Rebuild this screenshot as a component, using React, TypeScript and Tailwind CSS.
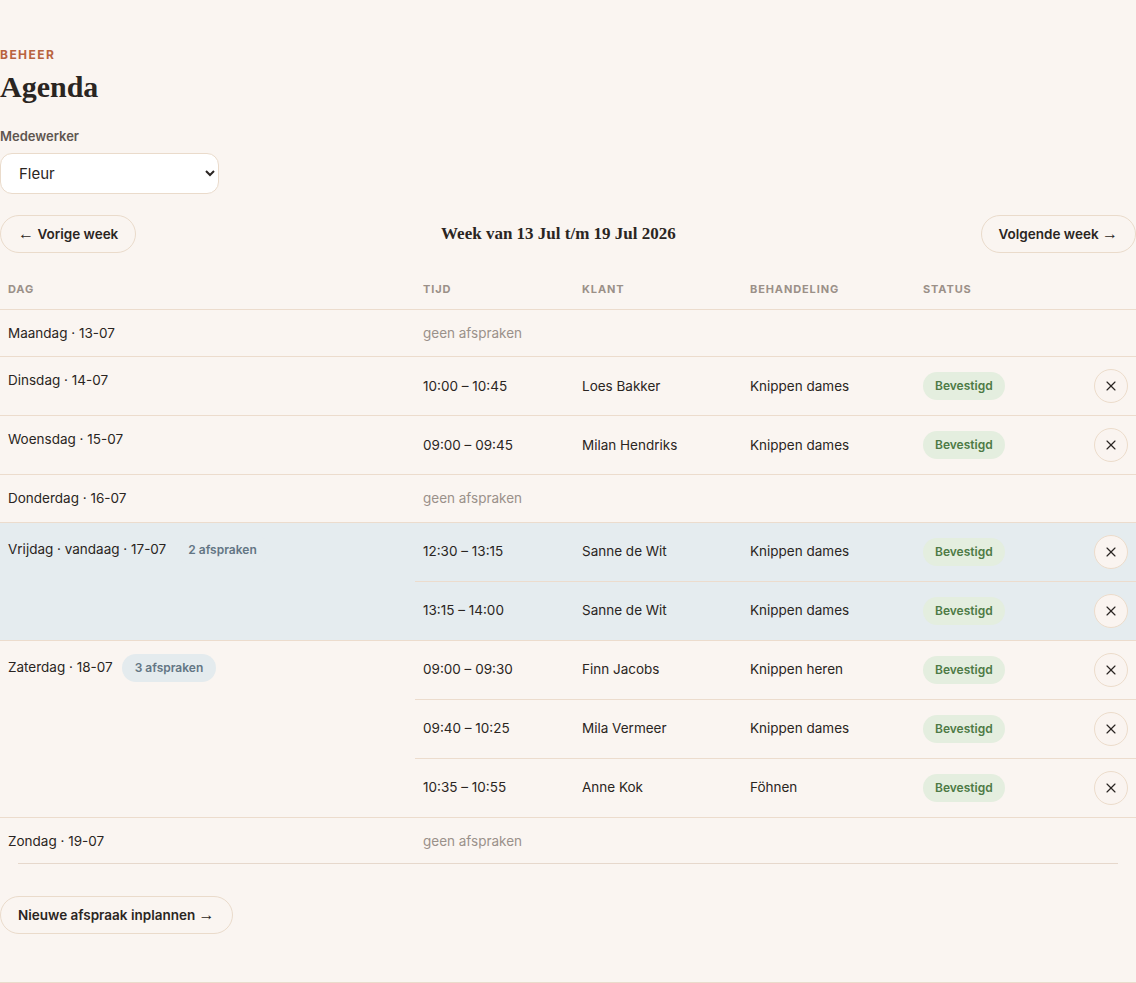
import { X } from 'lucide-react'

type Afspraak = {
  tijd: string
  klant: string
  behandeling: string
}

type Dag = {
  label: string
  vandaag?: boolean
  afspraken: Afspraak[]
}

const DAGEN: Dag[] = [
  { label: 'Maandag · 13-07', afspraken: [] },
  { label: 'Dinsdag · 14-07', afspraken: [{ tijd: '10:00 – 10:45', klant: 'Loes Bakker', behandeling: 'Knippen dames' }] },
  { label: 'Woensdag · 15-07', afspraken: [{ tijd: '09:00 – 09:45', klant: 'Milan Hendriks', behandeling: 'Knippen dames' }] },
  { label: 'Donderdag · 16-07', afspraken: [] },
  {
    label: 'Vrijdag · vandaag · 17-07',
    vandaag: true,
    afspraken: [
      { tijd: '12:30 – 13:15', klant: 'Sanne de Wit', behandeling: 'Knippen dames' },
      { tijd: '13:15 – 14:00', klant: 'Sanne de Wit', behandeling: 'Knippen dames' },
    ],
  },
  {
    label: 'Zaterdag · 18-07',
    afspraken: [
      { tijd: '09:00 – 09:30', klant: 'Finn Jacobs', behandeling: 'Knippen heren' },
      { tijd: '09:40 – 10:25', klant: 'Mila Vermeer', behandeling: 'Knippen dames' },
      { tijd: '10:35 – 10:55', klant: 'Anne Kok', behandeling: 'Föhnen' },
    ],
  },
  { label: 'Zondag · 19-07', afspraken: [] },
]

const serif = { fontFamily: '"Liberation Serif", "Times New Roman", serif' }

// thin arrows like the reference
const Arrow = ({ children }: { children: string }) => (
  <span style={{ fontFamily: '"Liberation Sans", Arial, sans-serif' }} className="text-base font-normal leading-none">
    {children}
  </span>
)

function DagRijen({ dag }: { dag: Dag }) {
  const rowBg = dag.vandaag ? 'bg-[#e5ecef]' : ''
  const pillBg = dag.vandaag ? 'bg-[#e5ecef]' : 'bg-[#e4ebee]'
  const cell = 'border-t border-[#ecdccd] px-2 py-3 align-middle'

  if (dag.afspraken.length === 0) {
    return (
      <tr className={rowBg}>
        <td className="border-t border-[#ecdccd] px-2 py-[13px] align-top">{dag.label}</td>
        <td colSpan={5} className="border-t border-[#ecdccd] px-2 py-[13px] text-[#9a918a]">
          geen afspraken
        </td>
      </tr>
    )
  }

  return (
    <>
      {dag.afspraken.map((a, i) => (
        <tr key={i} className={rowBg}>
          {i === 0 && (
            <td rowSpan={dag.afspraken.length} className="border-t border-[#ecdccd] px-2 py-[13px] align-top">
              <div className="flex items-center">
                <span>{dag.label}</span>
                {dag.afspraken.length > 1 && (
                  <span className={`ml-[9px] rounded-full ${pillBg} px-[13px] py-1.5 text-xs font-semibold leading-4 text-[#637684]`}>
                    {dag.afspraken.length} afspraken
                  </span>
                )}
              </div>
            </td>
          )}
          <td className={cell}>{a.tijd}</td>
          <td className={cell}>{a.klant}</td>
          <td className={cell}>{a.behandeling}</td>
          <td className={cell}>
            <span className="inline-flex h-7 items-center rounded-full bg-[#e4eedf] px-3 text-xs font-semibold text-[#4d7a45]">
              Bevestigd
            </span>
          </td>
          <td className={`${cell} text-right`}>
            <button className="inline-flex h-[34px] w-[34px] items-center justify-center rounded-full border border-[#ecdccb] bg-[#faf4f0] text-[#2a2522]">
              <X className="h-4 w-4" strokeWidth={1.75} />
            </button>
          </td>
        </tr>
      ))}
    </>
  )
}

export default function App() {
  return (
    <div
      className="min-h-screen bg-[#faf5f1] text-[13.5px] text-[#2a2522]"
      style={{ fontFamily: 'Inter, "Noto Sans", sans-serif' }}
    >
      <main className="pt-[47px] pb-12">
        <p className="text-xs font-bold uppercase leading-4 tracking-[0.12em] text-[#b9643f]">Beheer</p>
        <h1 className="mt-1.5 text-[30px] font-bold leading-9" style={serif}>
          Agenda
        </h1>

        {/* Medewerker */}
        <label className="mt-[21px] block text-[13px] font-semibold leading-5 text-[#5f5650]">Medewerker</label>
        <select
          defaultValue="Fleur"
          className="mt-[7px] h-[41px] w-[219px] rounded-xl border border-[#eadbcb] bg-white px-[14px] text-[15px] text-[#2a2522]"
        >
          <option>Fleur</option>
          <option>Sanne</option>
        </select>

        {/* Week navigation */}
        <div className="mt-[21px] flex items-center justify-between">
          <button className="h-[38px] rounded-full border border-[#eadbcb] px-[17px] font-semibold">
            <Arrow>←</Arrow> Vorige week
          </button>
          <h2 className="text-[17px] font-bold" style={serif}>
            Week van 13 Jul t/m 19 Jul 2026
          </h2>
          <button className="h-[38px] rounded-full border border-[#eadbcb] px-[17px] font-semibold">
            Volgende week <Arrow>→</Arrow>
          </button>
        </div>

        {/* Week table */}
        <table className="mt-4 w-full table-fixed border-collapse text-left">
          <colgroup>
            <col className="w-[415px]" />
            <col className="w-[159px]" />
            <col className="w-[168px]" />
            <col className="w-[173px]" />
            <col className="w-[170px]" />
            <col />
          </colgroup>
          <thead>
            <tr className="text-[11px] font-bold uppercase tracking-[0.08em] text-[#9b9088]">
              <th className="px-2 py-3 leading-4">Dag</th>
              <th className="px-2 py-3 leading-4">Tijd</th>
              <th className="px-2 py-3 leading-4">Klant</th>
              <th className="px-2 py-3 leading-4">Behandeling</th>
              <th className="px-2 py-3 leading-4">Status</th>
              <th className="px-2 py-3 leading-4"></th>
            </tr>
          </thead>
          <tbody>
            {DAGEN.map((dag) => (
              <DagRijen key={dag.label} dag={dag} />
            ))}
          </tbody>
        </table>
        <div className="mx-[18px] -mt-px h-px bg-[#e6d8cc]" />

        <button className="mt-8 h-[38px] rounded-full border border-[#eadbcb] px-[17px] font-semibold">
          Nieuwe afspraak inplannen <Arrow>→</Arrow>
        </button>
      </main>
      <footer className="h-24 border-t border-[#eadbcb]" />
    </div>
  )
}
